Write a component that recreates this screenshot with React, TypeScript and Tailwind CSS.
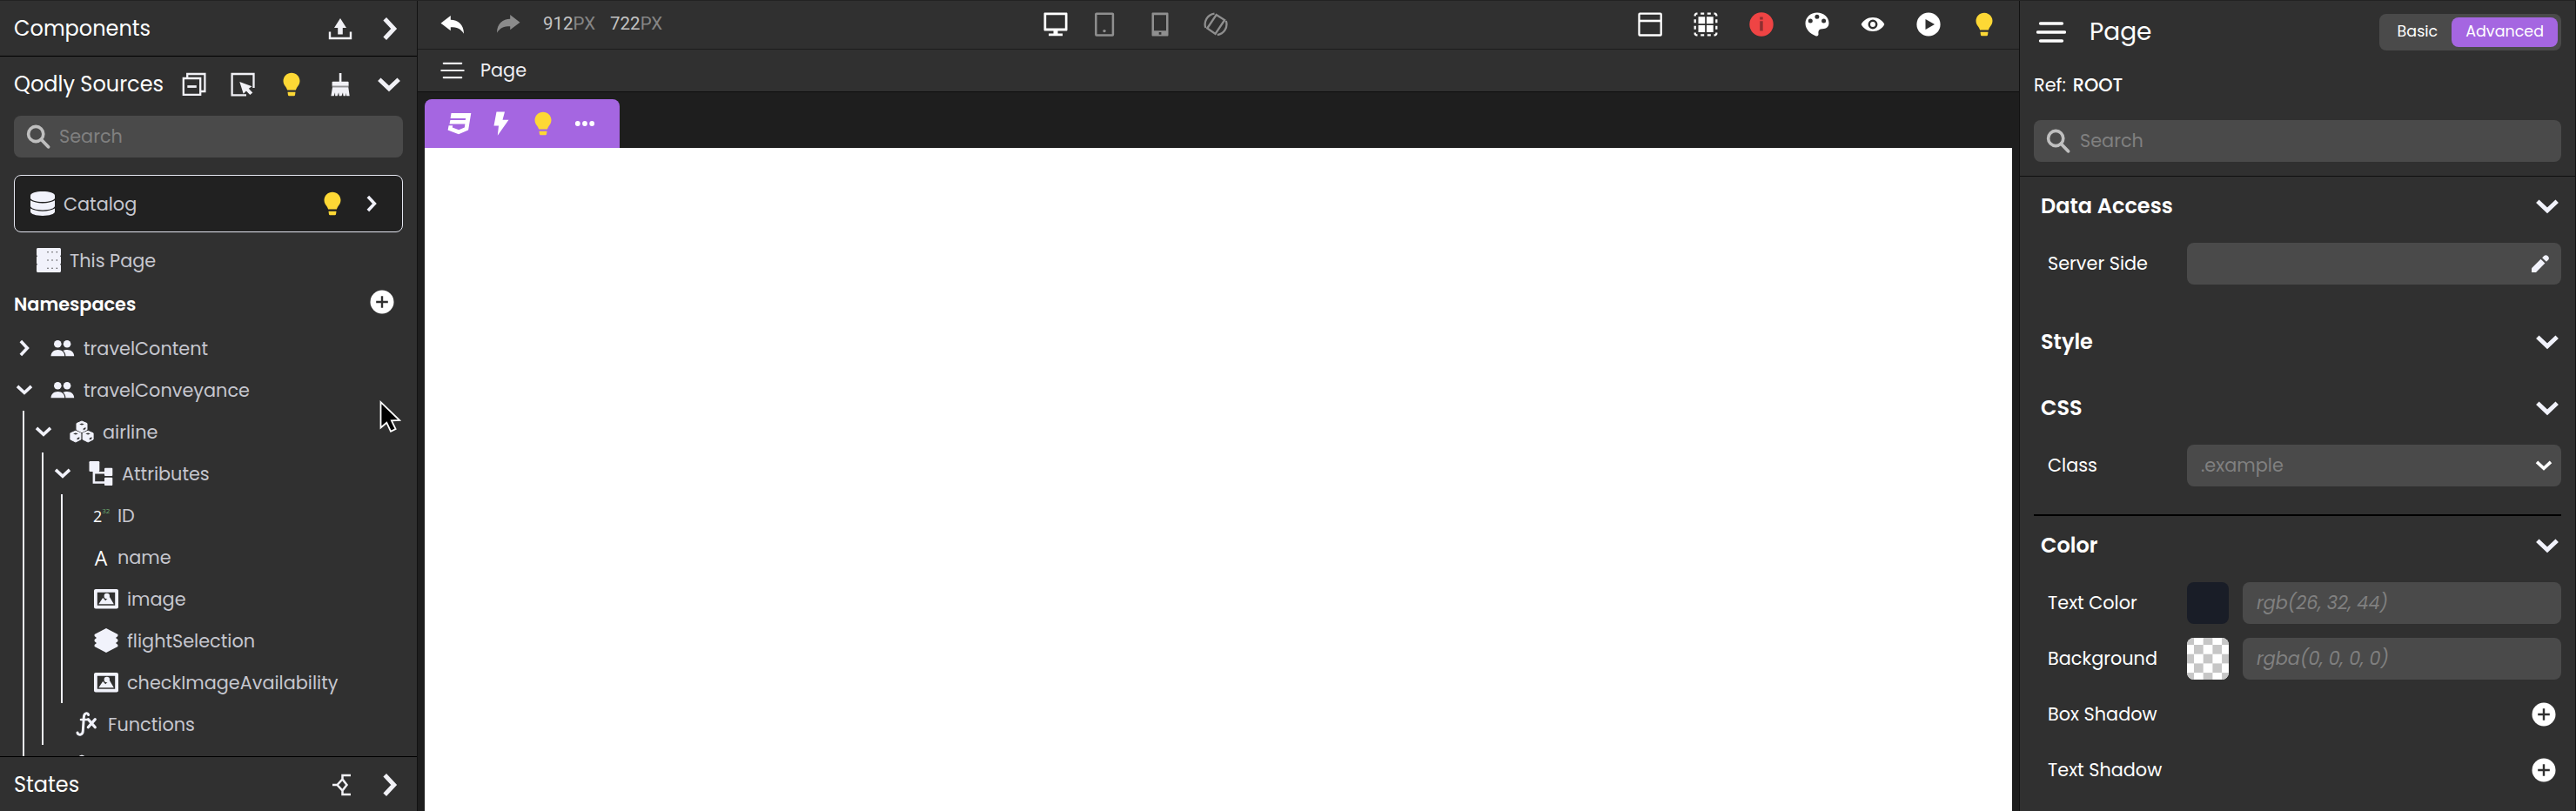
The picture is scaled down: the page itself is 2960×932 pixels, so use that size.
import React from "react";

type IconProps = { className?: string };
type Drawing = IconProps & { children: React.ReactNode; size?: number };

const Svg = ({ className = "", size = 28, children }: Drawing) => (
  <svg viewBox="0 0 28 28" width={size} height={size} fill="currentColor" className={"shrink-0 " + className}>
    {children}
  </svg>
);

const Chevron = ({ size = 28, down = false, className = "" }: { size?: number; down?: boolean; className?: string }) => (
  <Svg size={size} className={className + (down ? " rotate-90" : "")}>
    <path d="M8.2 2.8 18.7 14 8.2 25.2" fill="none" stroke="currentColor" strokeWidth="5" />
  </Svg>
);

const Bulb = ({ className = "" }: IconProps) => (
  <Svg className={"text-[#fdd835] " + className}>
    <path d="M14 .7C8.7.7 4.500 4.800 4.500 10c0 3.400 1.700 5.200 3.100 7.300.8 1.200 1.200 2.200 1.500 3.100h9.800c.3-.9.7-1.900 1.500-3.100 1.400-2.100 3.100-3.900 3.100-7.300C23.500 4.800 19.300.7 14 .7z" />
    <path d="M9.500 22.700h9l-.4 3c-.1 1.100-.8 1.600-1.800 1.600h-4.600c-1 0-1.700-.5-1.800-1.600z" />
  </Svg>
);

const Upload = () => (
  <Svg>
    <path d="M14 2 21 13h-4.200v7.500h-5.600V13H7z" />
    <path d="M2 17.500V25h24v-7.500" fill="none" stroke="currentColor" strokeWidth="2.400" />
  </Svg>
);

const CollapseAll = () => (
  <Svg>
    <g fill="none" stroke="currentColor" strokeWidth="2.300">
      <path d="M6.200 7V2h20.200v20H21" />
      <path d="M1.800 7h19.400v18.900H1.800z" />
      <path d="M6.300 16.500h10.500" strokeWidth="2.800" />
    </g>
  </Svg>
);

const SelectArea = () => (
  <Svg>
    <path d="M26.500 18V2H1.600v24.400H18" fill="none" stroke="currentColor" strokeWidth="2.300" />
    <path d="m10.300 11 14.200 5.300-3.700 2.500 4.500 4.600-3 2.700-4.400-4.600-3.200 3.300z" />
  </Svg>
);

const Broom = () => (
  <Svg>
    <path d="M12.800 1h2.600v9.700h7.300c.6 0 .9.400.9.900v4.200H4.600v-4.200c0-.5.300-.9.900-.9h7.300z" />
    <path d="M4.600 15.800h19v1.400h-19z" opacity=".5" />
    <path d="M5 17.200h18.300l1.400 10h-3.500l-1-3.500v3.500h-2.700l-.5-4-1.500 4h-2.800l-.6-4-1.400 4H8.200l-.2-4-1.300 4H3.400z" />
  </Svg>
);

const Magnifier = () => (
  <Svg className="text-[#bfbfbf]">
    <circle cx="11.200" cy="11" r="8.600" fill="none" stroke="currentColor" strokeWidth="3.600" />
    <path d="m17.300 17.300 8.200 8.500" fill="none" stroke="currentColor" strokeWidth="3.800" strokeLinecap="round" />
  </Svg>
);

const Database = () => (
  <Svg>
    <path d="M0 4.700C0 2.100 6.300 0 14 0s14 2.100 14 4.700v2.800c0 2.500-6.300 4.600-14 4.600S0 10 0 7.500z" />
    <path d="M0 10.300c3 2.100 8.500 3.100 14 3.100s11-1 14-3.100V16.800c0 2.600-6.300 4.700-14 4.700S0 19.400 0 16.800z" />
    <path d="M0 19.600c3 2.100 8.500 3.100 14 3.100s11-1 14-3.100v3.700C28 25.900 21.700 28 14 28S0 25.900 0 23.300z" />
  </Svg>
);

const PageSource = () => (
  <Svg>
    <path d="M1.500 0h25c.8 0 1.500.7 1.500 1.500v6.800l-1 1 1 1v7.400l-1 1 1 1v6.800c0 .8-.7 1.500-1.500 1.500h-25C.7 28 0 27.300 0 26.500v-6.800l1-1-1-1v-7.400l1-1-1-1V1.500C0 .7.700 0 1.500 0z" />
    <g fill="#303030">
      {[4.7, 14, 23.3].map((y) =>
        [13, 18, 23.3].map((x) => <rect key={x + "-" + y} x={x - 0.6} y={y - 0.6} width="1.200" height="1.200" />)
      )}
    </g>
  </Svg>
);

const People = () => (
  <Svg>
    <circle cx="8.300" cy="9.200" r="4.300" />
    <circle cx="19.100" cy="9.200" r="4.300" />
    <path d="M.5 23.200c0-4.400 3.500-7.200 8-7.200s7.700 2.800 7.700 7.200z" />
    <path d="M14.500 17c1.200-.7 2.800-1 4.600-1 4.600 0 8.100 2.800 8.100 7.200h-9.800c0-2.600-1-4.700-2.900-6.200z" />
  </Svg>
);

const Cube = ({ x, y }: { x: number; y: number }) => (
  <g transform={`translate(${x} ${y})`}>
    <path d="M0-6.600 6-4V3.200L0 6.200-6 3.200V-4z" stroke="currentColor" strokeWidth="1" strokeLinejoin="round" />
    <path d="M-2.800-3.200 0-2.200l2.800-1L0-4.200zM1.700 1.800l2.700-1.400v2L1.700 3.800z" fill="#303030" />
  </g>
);

const Cubes = () => (
  <Svg>
    <Cube x={14} y={8.6} />
    <Cube x={6.9} y={19.8} />
    <Cube x={21.1} y={19.8} />
  </Svg>
);

const Attributes = () => (
  <Svg>
    <rect x=".5" y="0" width="11.800" height="12" rx="1.200" />
    <rect x="18" y="7.800" width="9.300" height="9.300" rx="1" />
    <rect x="18" y="18.800" width="9.300" height="9.300" rx="1" />
    <path d="M5.900 11v13.500h13M5.900 13.300h13" fill="none" stroke="currentColor" strokeWidth="2.600" />
  </Svg>
);

const Picture = () => (
  <Svg>
    <path fillRule="evenodd" d="M2 3h24c1.200 0 2 .8 2 2v18.500c0 1.200-.8 2-2 2H2c-1.200 0-2-.8-2-2V5c0-1.200.8-2 2-2zm1.800 3.800v15h20.400v-15z" />
    <path d="M5.300 20.300 10.200 13l3 3.300 4.600-4.500 5 8.500z" />
    <circle cx="14.800" cy="11" r="3.200" />
  </Svg>
);

const Layers = () => (
  <Svg>
    <path d="M14 0 27.400 7v2L25 11l2.400 2v2L25 17l2.400 2v2L14 28 .6 21v-2L3 17 .6 15v-2L3 11 .6 9V7z" />
  </Svg>
);

const Fx = () => (
  <Svg>
    <g fill="none" stroke="currentColor" strokeLinecap="round" transform="translate(1 0)">
      <path d="M2 24c.4 3.300 6.200 3.200 6.300-2L9.300 6.500c.2-5.600 4.700-5.800 5.300-3" strokeWidth="3" />
      <path d="M6 9h7.200" strokeWidth="2.600" />
      <path d="m14.300 8.600 8 9.200M22.300 8.600l-8 9.200" strokeWidth="3.200" />
    </g>
  </Svg>
);

const StateBranch = () => (
  <Svg>
    <path d="M5 14h5.500M10.500 14 16.500 7.500 21.500 14l-5 6.500zM16.500 8.500V3h9.500M16.500 19.500V25h9.500" fill="none" stroke="currentColor" strokeWidth="2.500" />
  </Svg>
);

const PlusCircle = ({ className = "" }: IconProps) => (
  <Svg className={className}>
    <circle cx="14" cy="14" r="13.500" />
    <path d="M14 7.200v13.600M7.200 14h13.600" stroke="#303030" strokeWidth="2.400" />
  </Svg>
);

const Undo = () => (
  <Svg>
    <path d="M.5 12.700 11.800 4v4.800C20 8.900 27 14 27 24.700c-3.500-5.800-8-7.500-15.200-7.500v4z" />
  </Svg>
);

const Menu = ({ thick = 2.2 }: { thick?: number }) => (
  <Svg>
    <path d="M3.800 5.800h20.400M1.300 14h25.400M3.800 22.200h20.400" stroke="currentColor" strokeWidth={thick} strokeLinecap="round" />
  </Svg>
);

const Css3 = () => (
  <Svg>
    <path d="M4.500 2h22.800l-3.200 19.400L13 26.200.6 21.500l1-5.300h4.600l-.4 2.400 7.400 2.600 6.600-2.600.6-4H2.500l.9-4.500h17.400l.4-2.200H3.600z" />
  </Svg>
);

const Bolt = () => (
  <Svg>
    <path d="M8.500.5h9.500L15.500 9.800h7L9.800 27.800l1.200-11.300H5.500z" />
  </Svg>
);

const Dots = () => (
  <Svg>
    <circle cx="5.800" cy="14" r="2.900" />
    <circle cx="14" cy="14" r="2.900" />
    <circle cx="22.200" cy="14" r="2.900" />
  </Svg>
);

const Monitor = () => (
  <Svg>
    <path fillRule="evenodd" d="M1.700.5h24.600c.8 0 1.200.5 1.200 1.200v18.500c0 .8-.4 1.300-1.200 1.300H16.500v3H22v2.800H6v-2.800h5.500v-3H1.700c-.8 0-1.200-.5-1.200-1.300V1.700C.5 1 .9.500 1.700.5zM3.200 3.200v15.300h21.600V3.200z" />
  </Svg>
);

const Tablet = () => (
  <Svg>
    <rect x="4.300" y="1.700" width="19.600" height="24.700" rx=".6" fill="none" stroke="currentColor" strokeWidth="2.500" />
    <circle cx="14" cy="21.600" r="1.700" />
  </Svg>
);

const Phone = () => (
  <Svg>
    <path fillRule="evenodd" d="M5.700.5h16.600c.8 0 1.200.4 1.200 1.200v24.600c0 .8-.4 1.200-1.200 1.200H5.700c-.8 0-1.200-.4-1.200-1.200V1.700C4.500.9 4.900.5 5.700.5zM7 3.200v18h14v-18zm5.700 19.900v2.700h2.700v-2.700z" />
  </Svg>
);

const Rotate = () => (
  <Svg>
    <g fill="none" stroke="currentColor" strokeWidth="2.300">
      <path d="M14.600 3 24.200 9 13.500 25 4.200 18.500z" />
      <path d="M2.300 18A12.400 12.400 0 0 1 12.500 1.700M25.800 10A12.400 12.400 0 0 1 15.800 26.200" />
    </g>
  </Svg>
);

const WindowFrame = () => (
  <Svg>
    <rect x="1.500" y="1.700" width="25.200" height="24.800" rx=".8" fill="none" stroke="currentColor" strokeWidth="2.300" />
    <path d="M2 10h24.500" stroke="currentColor" strokeWidth="2.600" />
  </Svg>
);

const GridFrame = () => (
  <Svg>
    <path d="M5.500 5.200h7.700v8H5.500zM15 5.200h7.700v8H15zM5.500 15h7.700v8H5.500zM15 15h7.700v8H15z" />
    <g fill="none" stroke="currentColor" strokeWidth="2.300">
      <path d="M4.500 1.700h-1a1.800 1.800 0 0 0-1.800 1.800v1M23.500 1.700h1a1.800 1.800 0 0 1 1.800 1.800v1M4.500 26.300h-1a1.800 1.800 0 0 1-1.800-1.800v-1M23.500 26.300h1a1.800 1.800 0 0 0 1.800-1.800v-1" />
      <path d="M8.200 1.700h4M15.800 1.700h4M8.200 26.300h4M15.800 26.300h4M1.700 8.200v4M1.700 15.800v4M26.300 8.200v4M26.300 15.800v4" />
    </g>
  </Svg>
);

const Info = () => (
  <Svg className="text-[#ef4444]">
    <circle cx="14" cy="14" r="13.700" />
    <path d="M12.200 5.500h3.500v3h-3.500zM12.200 10.300h3.500v11.200h-3.500z" fill="#8f2f30" />
  </Svg>
);

const Palette = () => (
  <Svg>
    <path
      fillRule="evenodd"
      d="M14 .5C6.500.5.500 6 .500 12.800c0 6.400 5.300 12.400 12.300 14.600 1.800.4 2.800-.6 2.700-2.400-.2-2.500-.1-5.800 4-5.800 4.800.2 8-2 8-6.700C27.500 5.700 21.500.5 14 .5zM6.300 7.500a2.500 2.500 0 1 1 0 5 2.500 2.500 0 0 1 0-5zM13.900 2.700a2.500 2.500 0 1 1 0 5 2.500 2.500 0 0 1 0-5zM21.600 7.500a2.500 2.500 0 1 1 0 5 2.500 2.500 0 0 1 0-5z"
    />
  </Svg>
);

const Eye = () => (
  <Svg>
    <path d="M.7 14C3 9.500 8 6 14 6s11 3.500 13.300 8C25 18.500 20 22 14 22S3 18.500.7 14z" />
    <circle cx="14" cy="14" r="4.200" fill="none" stroke="#303030" strokeWidth="2.500" />
  </Svg>
);

const Play = () => (
  <Svg>
    <circle cx="14" cy="14" r="13.600" />
    <path d="m10.500 8 10.500 6-10.500 6z" fill="#303030" />
  </Svg>
);

const Pencil = () => (
  <Svg size={20} className="text-[#f1f2fb]">
    <path d="M0 21.500 14.700 6.500l6.800 6.800L7 28H0z" />
    <path d="m17 4.500 3-3c2-2 4.200-1.500 5.700 0l1 1c1.600 1.600 1.600 3.700 0 5.500L23.700 11z" />
  </Svg>
);

const Cursor = () => (
  <svg viewBox="0 0 26 40" width="26" height="40" className="absolute top-[458px] left-[435px] z-10">
    <path d="M2.500 3v29.500l6.800-5.800 4.700 10 5.600-2.600-4.700-9.800 9.300-.3z" fill="#000" stroke="#fff" strokeWidth="1.800" />
  </svg>
);

const TreeRow = ({ label, icon, open, pad = "pl-3" }: { label: string; icon: React.ReactNode; open?: boolean; pad?: string }) => (
  <div className={"flex h-12 items-center " + pad}>
    {open !== undefined && <Chevron size={20} down={open} className="mr-5 text-[#f1f2fb]" />}
    {icon}
    <span className="ml-2.5 pt-[3px] whitespace-nowrap">{label}</span>
  </div>
);

const Field = ({ className = "", children }: { className?: string; children?: React.ReactNode }) => (
  <div className={"flex h-12 items-center rounded-lg bg-[#4a4a4a] text-[#808080] " + className}>{children}</div>
);

const SectionTitle = ({ title }: { title: string }) => (
  <div className="flex h-[70px] items-center justify-between pr-0.5 pb-0.5 pl-2 text-2xl leading-none font-semibold">
    {title}
    <Chevron down className="text-[#f1f2fb]" />
  </div>
);

const Row = ({ label, children }: { label: string; children?: React.ReactNode }) => (
  <div className="flex h-12 items-center pl-4">
    <span className="w-40 shrink-0 whitespace-nowrap">{label}</span>
    {children}
  </div>
);

function SourcesPanel() {
  return (
    <aside className="relative flex w-[480px] shrink-0 flex-col border-r border-[#121212] text-[20.800px] leading-none">
      <header className="flex h-16 shrink-0 items-center justify-between border-b border-black pr-[17px] pl-4 text-2xl leading-none">
        Components
        <div className="flex gap-[29px] text-[#f1f1f6]">
          <Upload />
          <Chevron />
        </div>
      </header>
      <header className="flex h-16 shrink-0 items-center justify-between pr-[18px] pl-4 text-2xl leading-none whitespace-nowrap">
        Qodly Sources
        <div className="flex gap-7 text-[#f1f1f6]">
          <CollapseAll />
          <SelectArea />
          <Bulb />
          <Broom />
          <Chevron down />
        </div>
      </header>
      <Field className="mx-4 mt-1 shrink-0 gap-2.5 pl-3.5">
        <Magnifier />
        Search
      </Field>
      <div className="flex min-h-0 flex-1 flex-col overflow-hidden text-[#c6c7cf]">
        <div className="mx-4 mt-5 flex h-[66px] shrink-0 items-center rounded-lg border border-[#e4e6f0] bg-[#212121] pl-[18px]">
          <span className="text-[#f1f2fb]">
            <Database />
          </span>
          <span className="ml-2.5 flex-1 pt-0.5">Catalog</span>
          <Bulb />
          <Chevron size={20} className="mr-[25px] ml-[21px] text-[#f1f2fb]" />
        </div>
        <div className="mt-2 flex h-12 shrink-0 items-center gap-2.5 pl-[42px]">
          <span className="text-[#f1f2fb]">
            <PageSource />
          </span>
          <span className="pt-[3px]">This Page</span>
        </div>
        <div className="flex h-[53px] shrink-0 items-center justify-between pr-[26px] pl-4 font-semibold text-white">
          <span className="pt-0.5">Namespaces</span>
          <PlusCircle className="mb-1.5" />
        </div>
        <div className="[&_svg]:text-[#f1f2fb]">
          <TreeRow label="travelContent" open={false} icon={<People />} pad="pl-[18px]" />
          <TreeRow label="travelConveyance" open icon={<People />} pad="pl-[18px]" />
          <div className="ml-[26px] border-l-2 border-[#f1f2fb]">
            <TreeRow label="airline" open icon={<Cubes />} />
            <div className="ml-5 border-l-2 border-[#f1f2fb]">
              <TreeRow label="Attributes" open icon={<Attributes />} />
              <div className="ml-5 border-l-2 border-[#f1f2fb]">
                <TreeRow
                  label="ID"
                  pad="pl-[35px]"
                  icon={
                    <span className="flex w-[18px] items-start pt-0.5 font-['Open_Sans',sans-serif] text-white">
                      <span className="text-[18px] leading-6">2</span>
                      <span className="pt-0.5 text-[8px] leading-none tracking-tight text-[#6fae72]">32</span>
                    </span>
                  }
                />
                <TreeRow
                  label="name"
                  pad="pl-[35px]"
                  icon={<span className="w-[18px] pt-0.5 text-center font-['Open_Sans',sans-serif] text-[23px] text-white">A</span>}
                />
                <TreeRow label="image" pad="pl-9" icon={<Picture />} />
                <TreeRow label="flightSelection" pad="pl-9" icon={<Layers />} />
                <TreeRow label="checkImageAvailability" pad="pl-9" icon={<Picture />} />
              </div>
              <TreeRow label="Functions" pad="pl-9" icon={<Fx />} />
            </div>
            <TreeRow label="" pad="pl-[52px]" icon={<Cubes />} />
          </div>
        </div>
      </div>
      <footer className="flex h-[63px] shrink-0 items-center justify-between border-t border-black pt-px pr-[17px] pl-4 text-2xl leading-none">
        States
        <div className="flex gap-[29px] text-[#f1f1f6]">
          <StateBranch />
          <Chevron />
        </div>
      </footer>
      <Cursor />
    </aside>
  );
}

function Workspace() {
  return (
    <main className="flex min-w-0 flex-1 flex-col bg-[#1e1e1e]">
      <div className="flex h-14 shrink-0 items-center border-b border-[#1d1d1d] bg-[#303030] px-[26px] pb-px">
        <div className="flex w-[693px] items-center">
          <Undo />
          <span className="ml-9 -scale-x-100 text-[#8b8b8b]">
            <span className="block -translate-y-px">
              <Undo />
            </span>
          </span>
          <div className="ml-[26px] flex gap-[17px] pb-0.5 font-['Roboto',sans-serif] text-[20.500px] text-[#c3c3c3]">
            <span>
              912<span className="text-[#858585]">PX</span>
            </span>
            <span>
              722<span className="text-[#858585]">PX</span>
            </span>
          </div>
        </div>
        <div className="flex gap-9 text-[#8f8f8f]">
          <span className="-mr-2 text-white">
            <Monitor />
          </span>
          <Tablet />
          <Phone />
          <Rotate />
        </div>
        <div className="ml-auto flex gap-9">
          <WindowFrame />
          <GridFrame />
          <Info />
          <Palette />
          <Eye />
          <Play />
          <Bulb />
        </div>
      </div>
      <div className="flex h-[49px] shrink-0 items-center gap-[18px] border-b border-[#0f0f0f] bg-[#303030] pl-[26px] text-[20.800px] leading-none text-[#eeeef2]">
        <Menu />
        <span className="pt-px">Page</span>
      </div>
      <div className="mt-2 ml-2 flex h-14 w-56 shrink-0 items-center gap-5 rounded-t-lg bg-[#a566e1] pl-[26px]">
        <Css3 />
        <Bolt />
        <Bulb />
        <Dots />
      </div>
      <div className="mx-2 flex-1 bg-white" />
    </main>
  );
}

function PropertiesPanel() {
  return (
    <aside className="flex w-[640px] shrink-0 flex-col border-x border-[#121212] text-[20.800px] leading-none">
      <div className="border-b border-[#101010] px-4 pb-4">
        <div className="flex h-[72px] items-center">
          <span className="ml-[3px] [&>svg]:h-[34px] [&>svg]:w-[34px]">
            <Menu thick={3} />
          </span>
          <span className="ml-[27px] flex-1 text-[28px] leading-none">Page</span>
          <div className="flex h-[42px] items-center rounded-lg bg-[#4a4a4a] p-1 text-[17.500px] leading-none">
            <span className="pr-4 pl-[17px]">Basic</span>
            <span className="flex h-[34px] items-center rounded-lg bg-[#a566e1] px-4">Advanced</span>
          </div>
        </div>
        <div className="flex h-[50px] items-center gap-2 pt-px">
          <span>Ref:</span>
          <span className="font-medium">ROOT</span>
        </div>
        <Field className="mt-[15px] gap-[11px] pl-3.5">
          <Magnifier />
          Search
        </Field>
      </div>
      <div className="flex flex-1 flex-col px-4">
        <SectionTitle title="Data Access" />
        <div className="mt-1.5">
          <Row label="Server Side">
            <Field className="flex-1 justify-end pr-3.5">
              <Pencil />
            </Field>
          </Row>
        </div>
        <div className="mt-8">
          <SectionTitle title="Style" />
        </div>
        <div className="mt-1.5">
          <SectionTitle title="CSS" />
        </div>
        <div className="mt-1.5">
          <Row label="Class">
            <Field className="flex-1 justify-between pr-2.5 pl-4">
              .example
              <Chevron size={20} down className="text-white" />
            </Field>
          </Row>
        </div>
        <div className="mt-8 border-t-2 border-black">
          <SectionTitle title="Color" />
        </div>
        <div className="mt-1.5 flex flex-col gap-4">
          <Row label="Text Color">
            <div className="mr-4 h-12 w-12 rounded-lg bg-[#191d27]" />
            <Field className="flex-1 pl-4 italic">rgb(26, 32, 44)</Field>
          </Row>
          <Row label="Background">
            <svg viewBox="0 0 48 48" className="mr-4 h-12 w-12 rounded-lg bg-white">
              <defs>
                <pattern id="checks" x="-2.700" y="-2.700" width="21.400" height="21.400" patternUnits="userSpaceOnUse">
                  <path d="M0 0h10.700v10.700H0zM10.700 10.700h10.700v10.700H10.700z" fill="#c6c6c6" />
                </pattern>
              </defs>
              <rect width="48" height="48" fill="url(#checks)" />
            </svg>
            <Field className="flex-1 pl-4 italic">rgba(0, 0, 0, 0)</Field>
          </Row>
          <Row label="Box Shadow">
            <PlusCircle className="mr-1.5 ml-auto" />
          </Row>
          <Row label="Text Shadow">
            <PlusCircle className="mr-1.5 ml-auto" />
          </Row>
        </div>
      </div>
    </aside>
  );
}

export default function App() {
  return (
    <div className="flex h-[932px] w-[2960px] overflow-hidden border-t border-[#222222] bg-[#303030] font-['Poppins','Inter',sans-serif] text-white">
      <SourcesPanel />
      <Workspace />
      <PropertiesPanel />
    </div>
  );
}
